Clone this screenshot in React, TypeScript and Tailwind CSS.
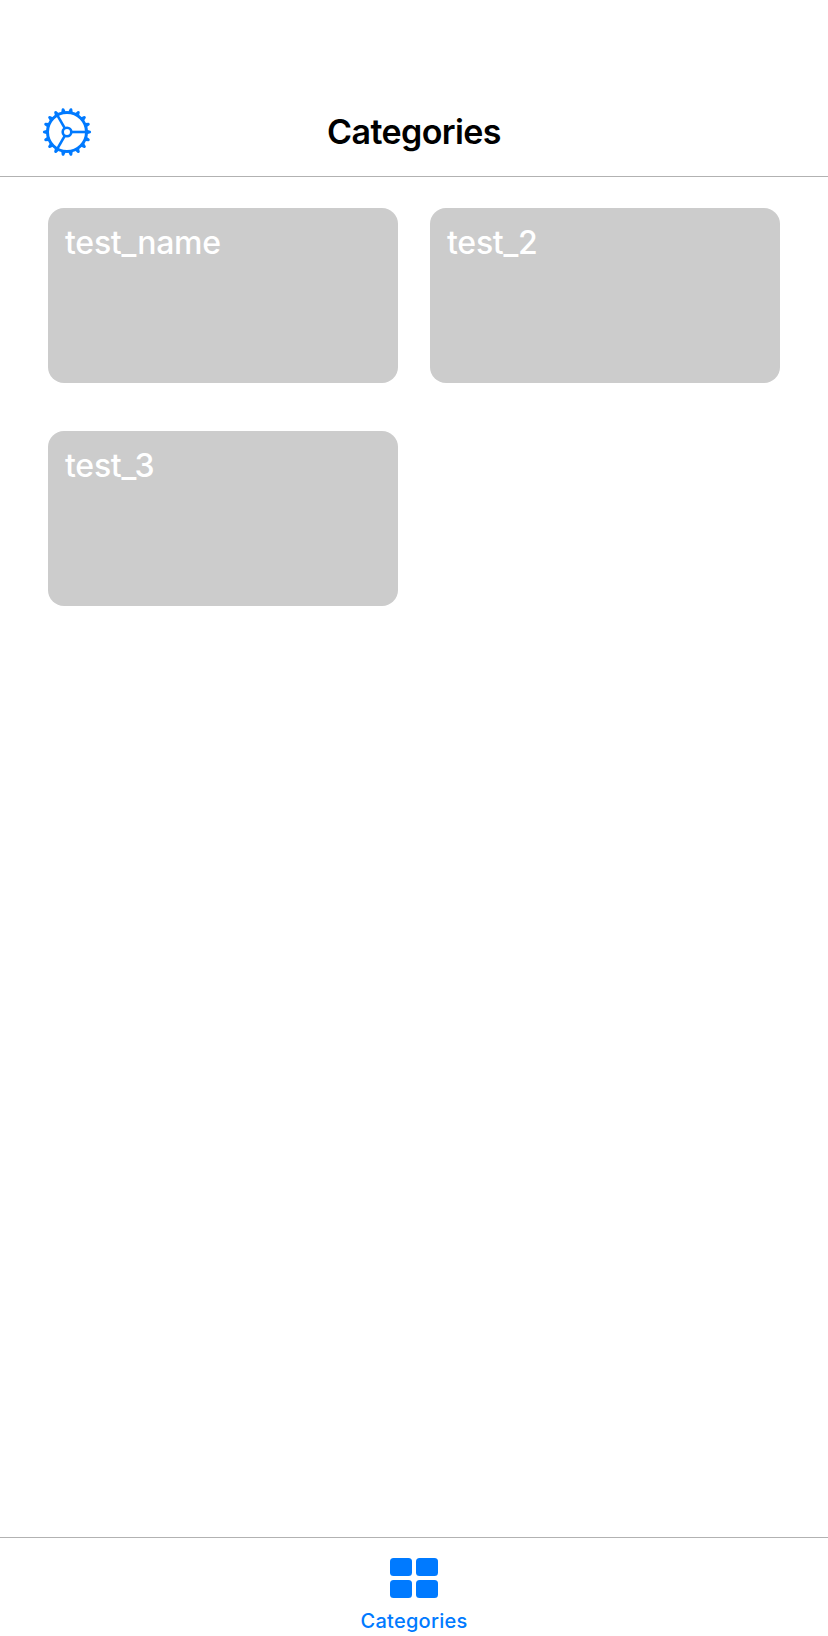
const categories = ['test_name', 'test_2', 'test_3'];
const teeth = Array.from({ length: 18 }, (_, i) => i * 20);

function GearIcon() {
  return (
    <svg className="size-[50px]" viewBox="-25 -25 50 50" fill="none" stroke="currentColor">
      <circle r="19.5" strokeWidth="3" />
      <circle r="4.3" strokeWidth="2.6" />
      {[0, 120, 240].map((a) => (
        <path key={a} d="M4.8 0H19.5" strokeWidth="2.6" transform={`rotate(${a})`} />
      ))}
      {teeth.map((a) => (
        <path
          key={a}
          d="M20 -2.3L23.3 -1.3Q24.1 -1 24.1 0Q24.1 1 23.3 1.3L20 2.3Z"
          fill="currentColor"
          stroke="none"
          transform={`rotate(${a})`}
        />
      ))}
    </svg>
  );
}

function GridIcon() {
  return (
    <svg className="h-10 w-12" viewBox="0 0 48 40" fill="currentColor">
      <rect width="22" height="18" rx="3.5" />
      <rect x="26" width="22" height="18" rx="3.5" />
      <rect y="22" width="22" height="18" rx="3.5" />
      <rect x="26" y="22" width="22" height="18" rx="3.5" />
    </svg>
  );
}

export default function App() {
  return (
    <div className="flex h-[1636px] w-[828px] flex-col overflow-hidden bg-white font-['Inter',sans-serif]">
      <header className="grid h-[177px] shrink-0 grid-cols-[1fr_auto_1fr] items-center border-b border-[#b2b2b2] pt-[88px]">
        <button className="ml-[42px] w-fit text-[#007aff]" aria-label="Settings">
          <GearIcon />
        </button>
        <h1 className="text-[34px] font-semibold leading-[40px] tracking-[-0.6px] text-black">Categories</h1>
      </header>
      <main className="grid flex-1 grid-cols-2 content-start gap-x-8 gap-y-12 px-12 pt-[31px]">
        {categories.map((name) => (
          <section key={name} className="h-[175px] rounded-2xl bg-[#cccccc] pl-[17px] pr-4 pt-4">
            <h2 className="text-[32px] font-medium leading-[38px] tracking-[-0.25px] text-white">{name}</h2>
          </section>
        ))}
      </main>
      <nav className="flex h-[99px] shrink-0 flex-col items-center border-t border-[#b2b2b2] pt-5 text-[#007aff]">
        <GridIcon />
        <span className="mt-[11px] text-[20px] font-medium leading-6 tracking-[0.25px]">Categories</span>
      </nav>
    </div>
  );
}
